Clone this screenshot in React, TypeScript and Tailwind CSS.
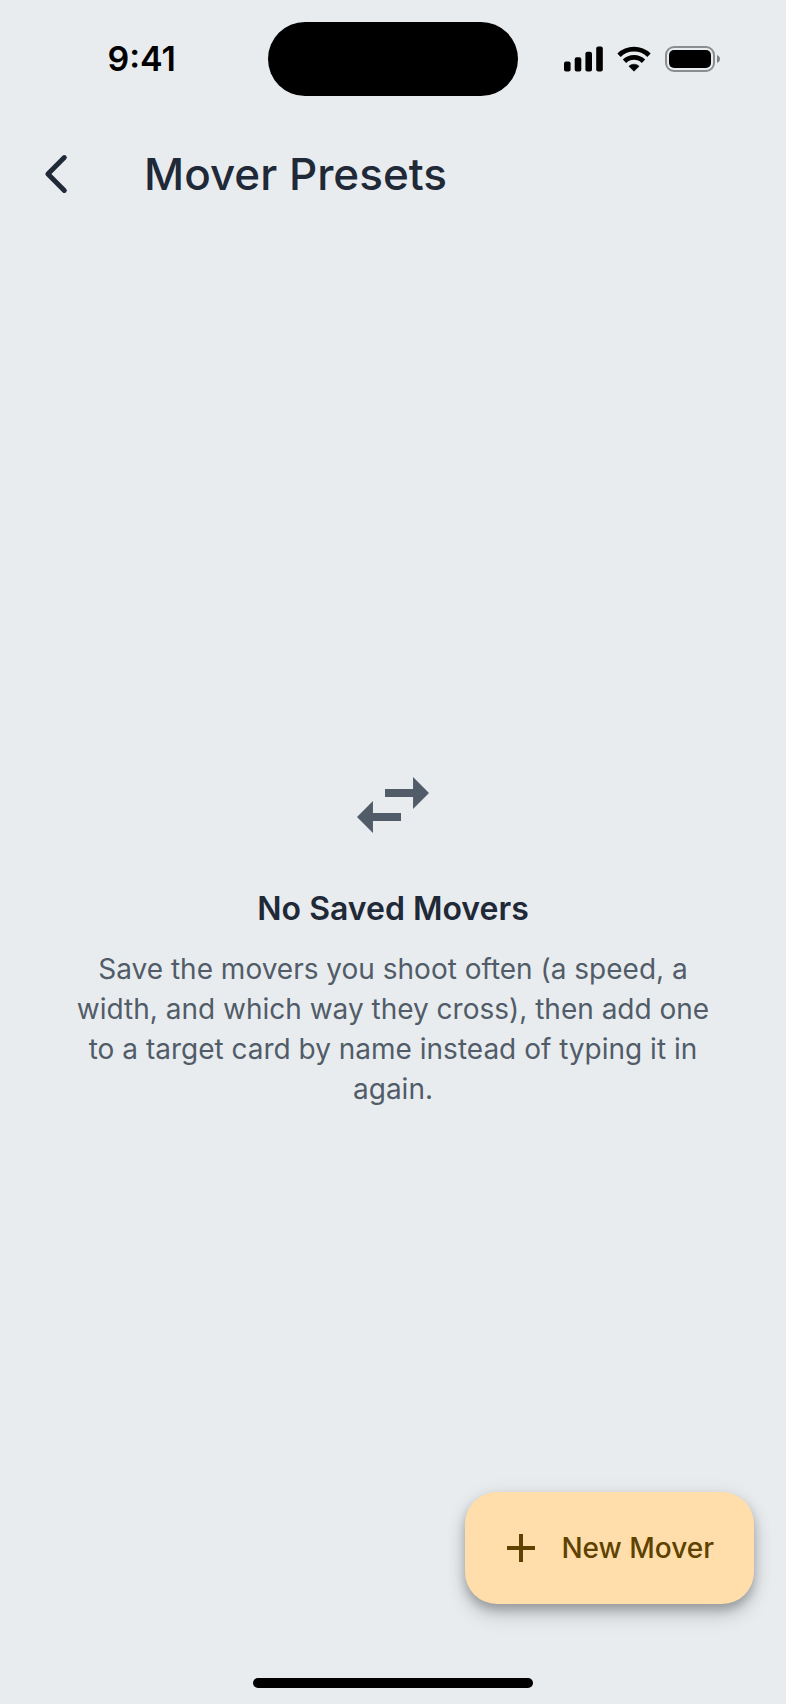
import type { ReactNode } from "react";

interface EmptyStateProps {
  icon: ReactNode;
  title: string;
  message: string;
}

interface AppBarProps {
  title: string;
}

const SignalIcon = () => (
  <svg width="39" height="26" viewBox="0 0 39 26" fill="currentColor" aria-hidden="true">
    <rect x="0" y="15.5" width="6.6" height="10" rx="2" />
    <rect x="10.7" y="11.3" width="6.6" height="14.2" rx="2" />
    <rect x="21.4" y="5.7" width="6.6" height="19.8" rx="2" />
    <rect x="32.2" y="0.5" width="6.6" height="25" rx="2" />
  </svg>
);

const WifiIcon = () => (
  <svg width="34" height="26" viewBox="0 0 34 26" aria-hidden="true">
    <g fill="none" stroke="currentColor" strokeWidth="4.8">
      <path d="M2 9.2a21.6 21.6 0 0 1 30 0" />
      <path d="M7.5 15.3a13.6 13.6 0 0 1 19 0" />
    </g>
    <path
      d="M11.9 20.2a7.4 7.4 0 0 1 10.2 0L17 25.2z"
      fill="currentColor"
      stroke="currentColor"
      strokeWidth="0.6"
      strokeLinejoin="round"
    />
  </svg>
);

const BatteryIcon = () => (
  <svg width="56" height="26" viewBox="0 0 56 26" aria-hidden="true">
    <rect
      x="1"
      y="1"
      width="48"
      height="24"
      rx="8"
      fill="none"
      stroke="currentColor"
      strokeOpacity="0.4"
      strokeWidth="2"
    />
    <path d="M52 9c1.8.7 3 2.2 3 4s-1.2 3.3-3 4z" fill="currentColor" fillOpacity="0.45" />
    <rect x="4" y="4" width="42" height="18" rx="5" fill="currentColor" />
  </svg>
);

const ChevronIcon = () => (
  <svg width="48" height="48" viewBox="0 0 48 48" fill="none" aria-hidden="true">
    <path
      d="M32.3 7.6 15.9 24l16.400 16.400"
      stroke="currentColor"
      strokeWidth="5"
      strokeLinecap="round"
      strokeLinejoin="round"
    />
  </svg>
);

const SwapIcon = () => (
  <svg width="96" height="96" viewBox="0 0 24 24" fill="currentColor" aria-hidden="true">
    <path d="M6.990 11L3 15l3.990 4v-3H14v-2H6.990v-3zM21 9l-3.990-4v3H10v2h7.010v3L21 9z" />
  </svg>
);

const PlusIcon = () => (
  <svg width="48" height="48" viewBox="0 0 24 24" fill="currentColor" aria-hidden="true">
    <path d="M19 13h-6v6h-2v-6H5v-2h6V5h2v6h6v2z" />
  </svg>
);

const StatusBar = () => {
  return (
    <div className="grid h-[118px] grid-cols-[1fr_250px_1fr] items-center text-black">
      <span className="pr-[92px] text-right text-[34px] leading-10 font-semibold">9:41</span>
      <div className="h-[74px] rounded-full bg-black" />
      <div className="flex items-center gap-3.5 pl-[46px]">
        <SignalIcon />
        <WifiIcon />
        <BatteryIcon />
      </div>
    </div>
  );
};

const AppBar = ({ title }: AppBarProps) => {
  return (
    <header className="flex h-28 items-center gap-8 text-[#1f2937]">
      <button type="button" aria-label="Back" className="flex size-28 items-center justify-center">
        <ChevronIcon />
      </button>
      <h1 className="text-[44px] leading-[56px] font-medium">{title}</h1>
    </header>
  );
};

const EmptyState = ({ icon, title, message }: EmptyStateProps) => {
  return (
    <main className="flex flex-1 flex-col items-center justify-center px-16 text-center">
      <div className="text-[#525c69]">{icon}</div>
      <h2 className="mt-8 text-[32px] leading-[48px] font-semibold text-[#1f2937]">{title}</h2>
      <p className="mt-4 text-[28px] leading-10 text-[#525c69]">{message}</p>
    </main>
  );
};

const NewMoverButton = () => {
  return (
    <button
      type="button"
      className="absolute right-8 bottom-[100px] flex h-28 items-center gap-4 rounded-[32px] bg-[#ffdeab] pr-10 pl-8 text-[28px] leading-10 font-medium text-[#5d4200] shadow-[0_6px_10px_rgba(0,0,0,0.2),0_12px_20px_rgba(0,0,0,0.14),0_2px_20px_rgba(0,0,0,0.08)]"
    >
      <PlusIcon />
      New Mover
    </button>
  );
};

export default function App() {
  return (
    <div className="relative flex min-h-screen flex-col bg-[#e8ecef] font-['Inter',sans-serif]">
      <StatusBar />
      <AppBar title="Mover Presets" />
      <EmptyState
        icon={<SwapIcon />}
        title="No Saved Movers"
        message="Save the movers you shoot often (a speed, a width, and which way they cross), then add one to a target card by name instead of typing it in again."
      />
      <NewMoverButton />
      <footer className="flex h-[68px] items-end justify-center pb-4">
        <div className="h-[10px] w-[280px] rounded-full bg-black" />
      </footer>
    </div>
  );
}
